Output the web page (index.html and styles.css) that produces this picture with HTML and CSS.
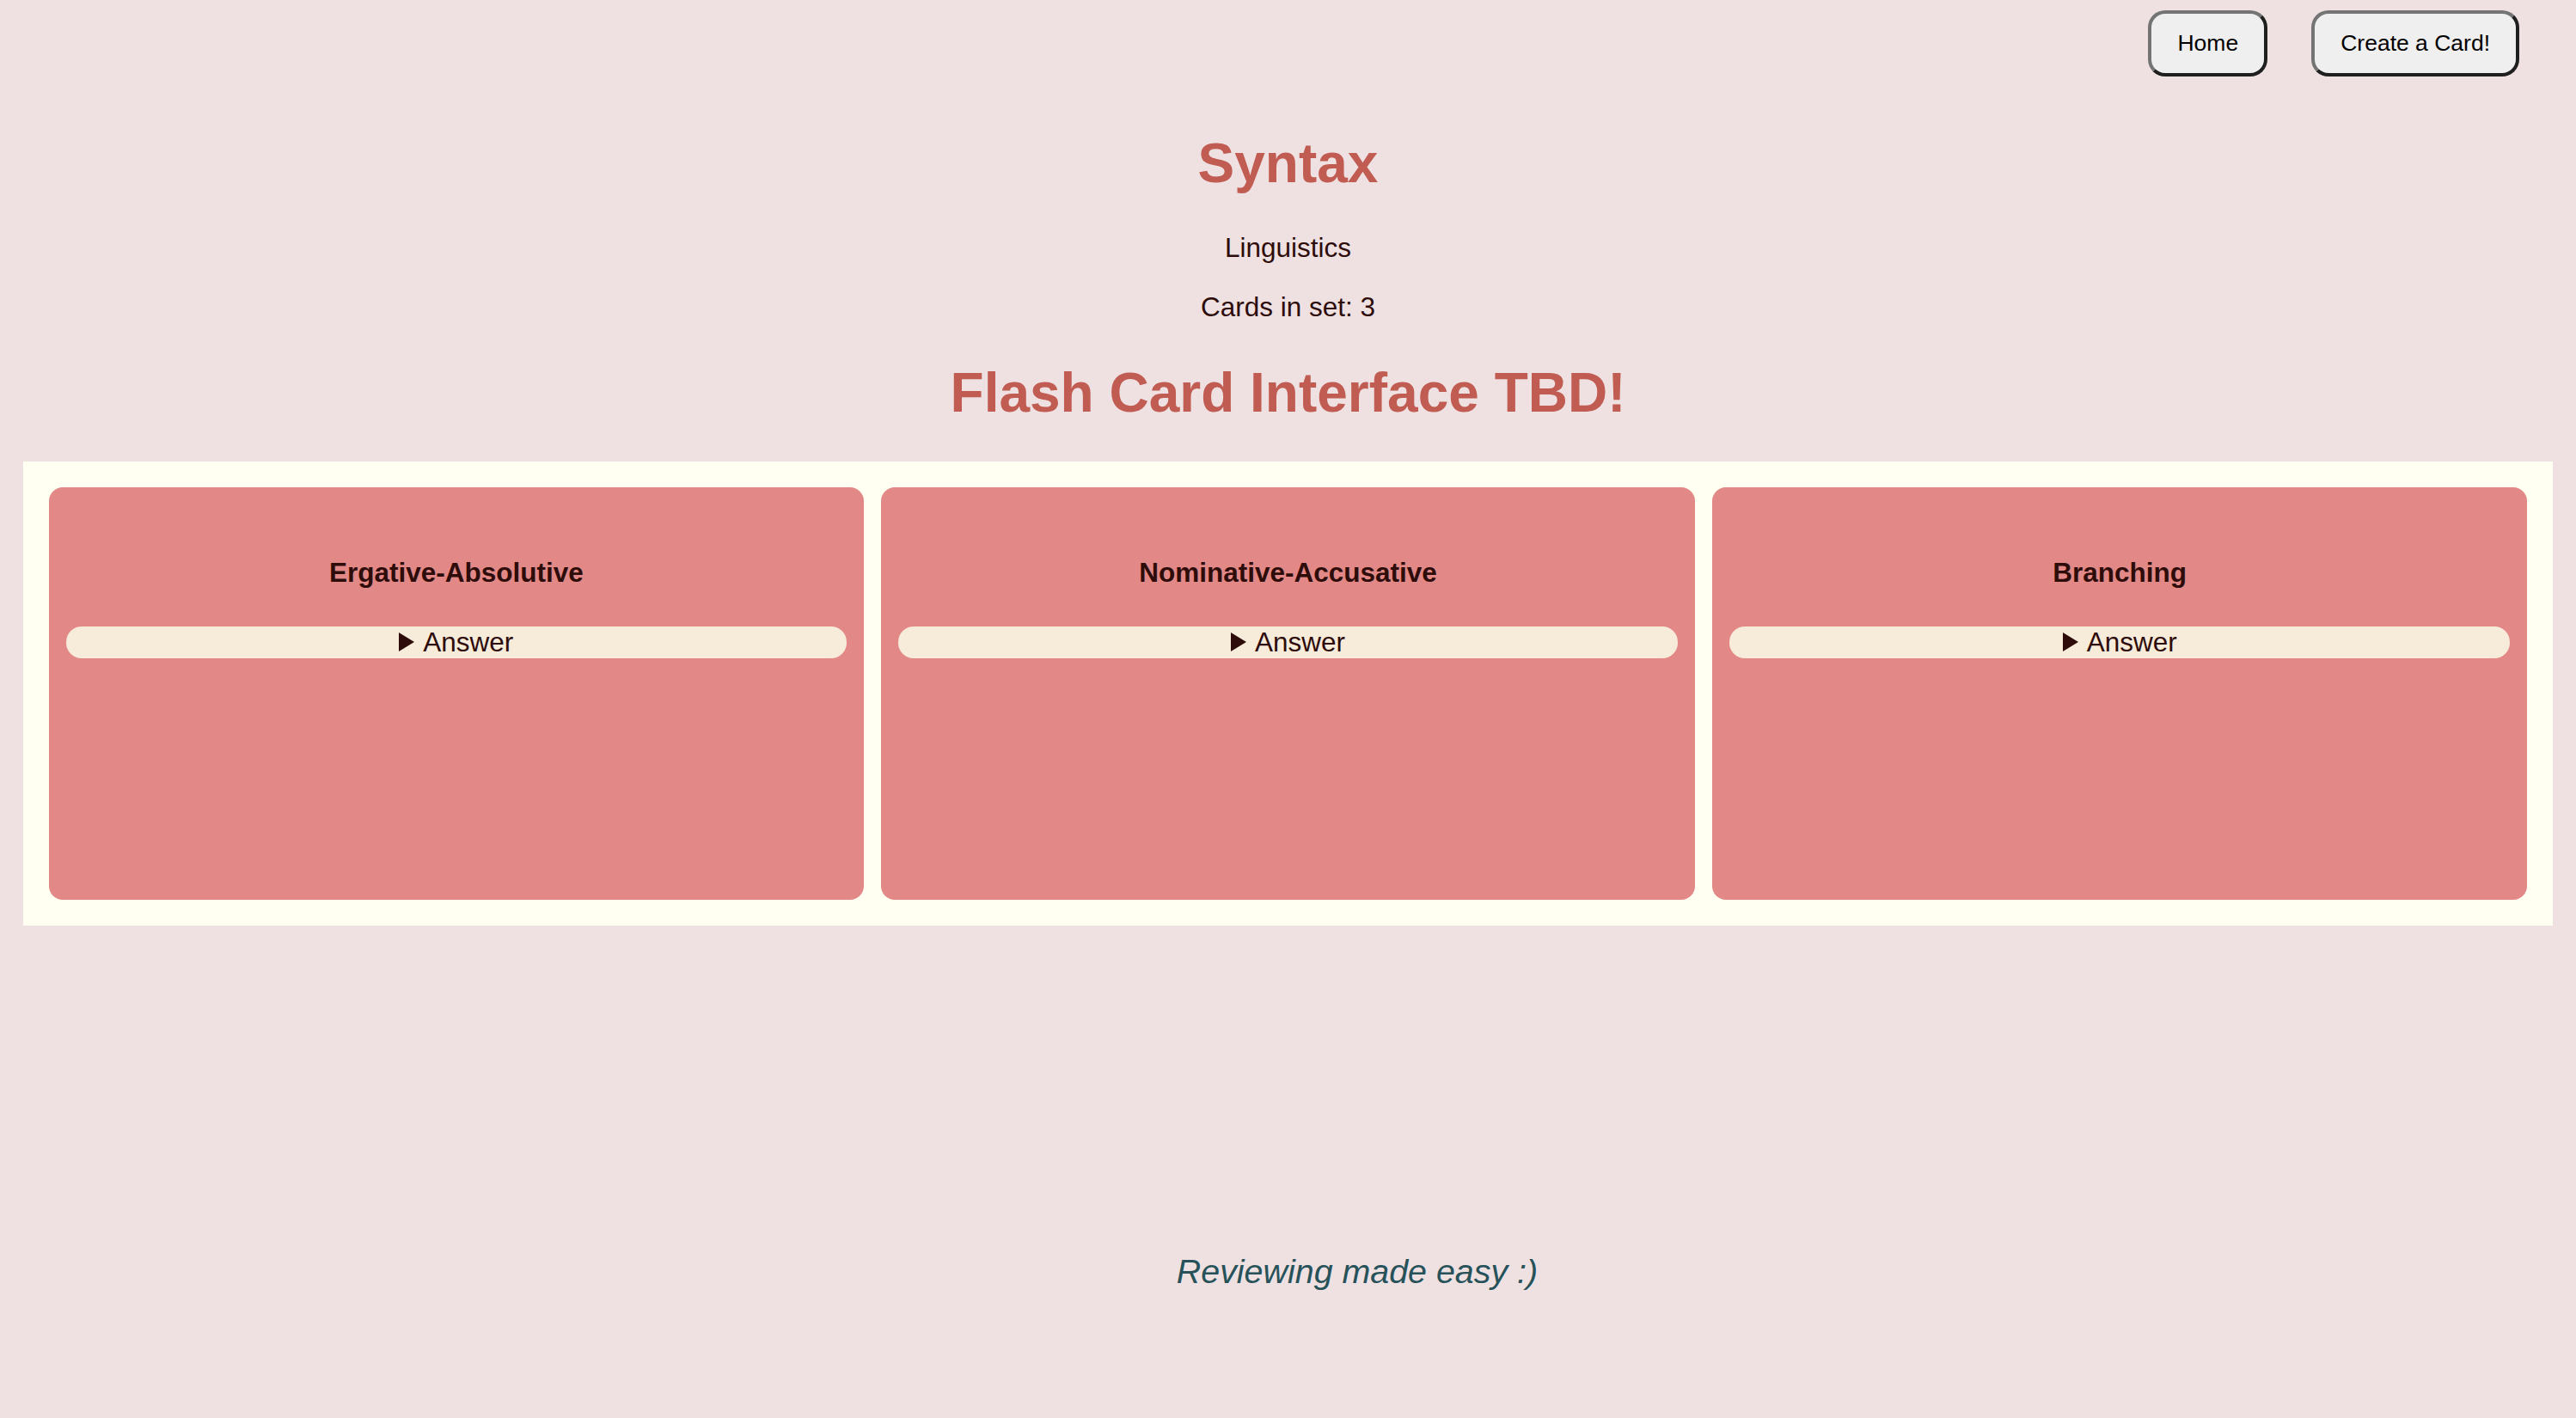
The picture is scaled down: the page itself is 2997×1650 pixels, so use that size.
FILE: index.html
```html
<!DOCTYPE html>
<html lang="en">
<head>
<meta charset="utf-8">
<title>Syntax</title>
<link rel="stylesheet" href="styles.css">
</head>
<body>
<nav class="topbar">
  <button class="nav-btn">Home</button>
  <button class="nav-btn">Create a Card!</button>
</nav>
<main class="set">
  <h1 class="set-title">Syntax</h1>
  <p class="set-subject">Linguistics</p>
  <p class="set-count">Cards in set: 3</p>
  <h1 class="set-title tbd">Flash Card Interface TBD!</h1>
  <section class="card-grid">
    <div class="card">
      <h3 class="card-term">Ergative-Absolutive</h3>
      <details class="card-answer"><summary>Answer</summary></details>
    </div>
    <div class="card">
      <h3 class="card-term">Nominative-Accusative</h3>
      <details class="card-answer"><summary>Answer</summary></details>
    </div>
    <div class="card">
      <h3 class="card-term">Branching</h3>
      <details class="card-answer"><summary>Answer</summary></details>
    </div>
  </section>
</main>
<footer class="footer">Reviewing made easy :)</footer>
</body>
</html>
```

FILE: styles.css
```css
html, body {
  margin: 0;
  padding: 0;
}
body {
  background: #efe1e2;
  font-family: "Liberation Sans", Arial, sans-serif;
  color: #2d0c0a;
  min-height: 1650px;
}
.topbar {
  display: flex;
  justify-content: flex-end;
  gap: 51px;
  padding: 12px 66px 0 0;
}
.nav-btn {
  font-family: "Liberation Sans", Arial, sans-serif;
  font-size: 26.5px;
  line-height: normal;
  color: #000;
  background: #efefef;
  border: 4px solid;
  border-color: #747474 #1f1f1f #1f1f1f #747474;
  border-radius: 20px;
  padding: 19px 30px;
  margin: 0;
  cursor: pointer;
}
.set {
  text-align: center;
}
.set-title {
  font-size: 64px;
  font-weight: bold;
  line-height: normal;
  color: #c05c52;
  margin: 64px 0 43px;
}
.set-title.tbd {
  margin: 0 0 43px;
}
.set-subject,
.set-count {
  font-size: 31.5px;
  line-height: normal;
  margin: 0 0 32px;
}
.set-count {
  margin-bottom: 44px;
}
.card-grid {
  display: grid;
  grid-template-columns: repeat(3, 1fr);
  gap: 20px;
  margin: 0 27px;
  padding: 30px;
  background: #fffff2;
}
.card {
  box-sizing: border-box;
  height: 480px;
  background: #e28886;
  border-radius: 16px;
  padding: 0 20px;
}
.card-term {
  font-size: 31.5px;
  font-weight: bold;
  line-height: normal;
  margin: 81px 0 44px;
}
.card-answer summary {
  display: block;
  list-style: none;
  background: #f7ebda;
  border-radius: 18px;
  font-size: 31.5px;
  line-height: normal;
  text-align: center;
  cursor: pointer;
}
.card-answer summary::-webkit-details-marker {
  display: none;
}
.card-answer summary::before {
  content: "";
  display: inline-block;
  width: 0;
  height: 0;
  border-left: 18px solid #2d0c0a;
  border-top: 11.2px solid transparent;
  border-bottom: 11.2px solid transparent;
  margin-right: 10px;
  vertical-align: baseline;
}
.footer {
  margin-top: 380px;
  padding-left: 161px;
  text-align: center;
  font-style: italic;
  font-size: 39.4px;
  line-height: normal;
  color: #27525a;
}
```
